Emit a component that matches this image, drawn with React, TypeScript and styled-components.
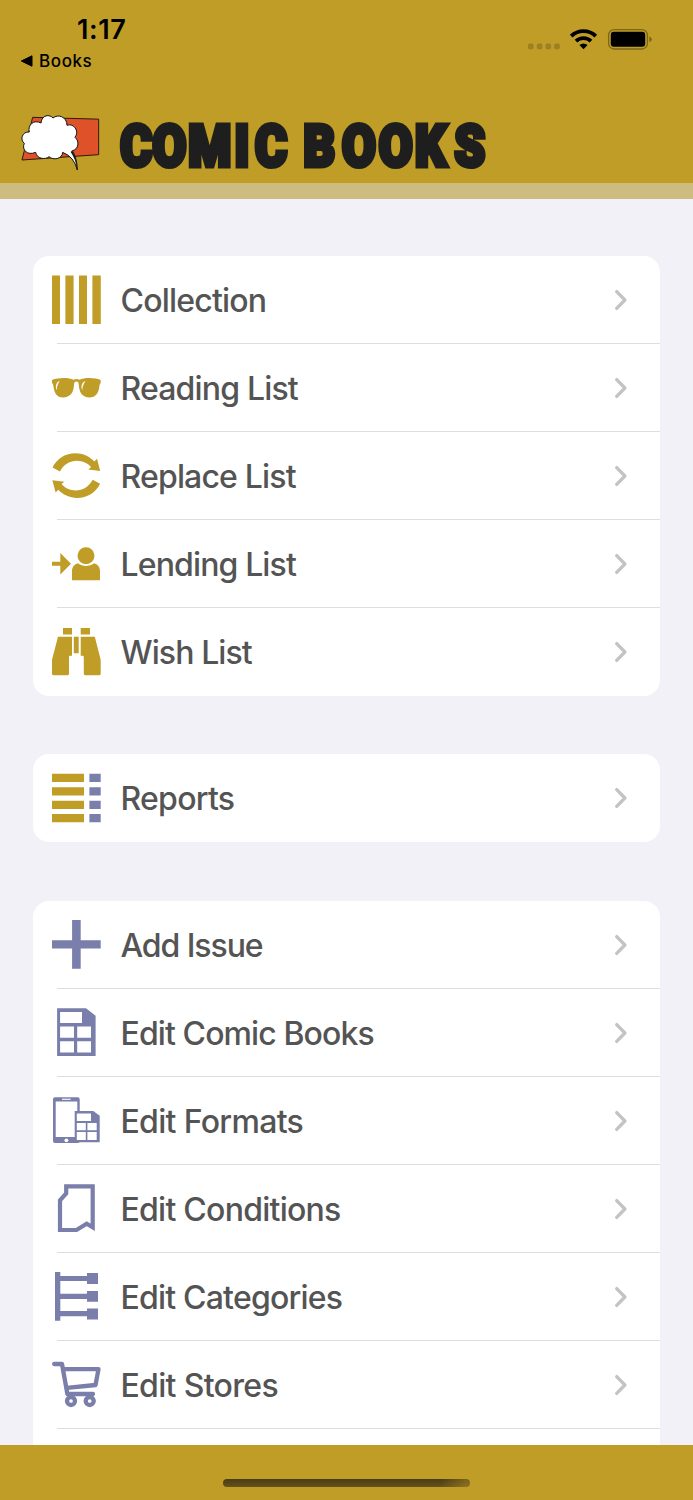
import React from 'react';
import styled, { createGlobalStyle } from 'styled-components';

const GOLD = '#bf9d27';
const VIOLET = '#7a7eaa';

const GlobalStyle = createGlobalStyle`
  *, *::before, *::after { box-sizing: border-box; }
  body { margin: 0; background: #f2f1f7; overflow: hidden; }
`;

const Screen = styled.div`
  width: 693px;
  height: 1500px;
  display: flex;
  flex-direction: column;
  background: #f2f1f7;
  font-family: Inter, 'Liberation Sans', sans-serif;
  overflow: hidden;
`;

const Header = styled.header`
  flex: none;
  height: 183px;
  background: ${GOLD};
  display: flex;
  flex-direction: column;
  justify-content: space-between;
`;

const StatusBar = styled.div`
  display: flex;
  justify-content: space-between;
  padding: 15px 41px 0 20px;
`;

const StatusLeft = styled.div`
  display: flex;
  flex-direction: column;
`;

const Clock = styled.div`
  padding-left: 57px;
  height: 30px;
  font-size: 27px;
  line-height: 30px;
  font-weight: 600;
  letter-spacing: 0.6px;
  color: #000;
`;

const BackLink = styled.div`
  display: flex;
  align-items: center;
  gap: 6px;
  margin-top: 5px;
  height: 22px;
  font-size: 17px;
  line-height: 22px;
  font-weight: 500;
  letter-spacing: 0.6px;
  color: #000;
`;

const StatusIcons = styled.svg`
  display: block;
  margin-top: 11px;
`;

const Brand = styled.div`
  display: flex;
  align-items: flex-end;
  gap: 17px;
  padding: 0 0 10px 20px;
`;

const BrandArt = styled.svg`
  display: block;
  flex: none;
`;

const Wordmark = styled.svg`
  display: block;
  flex: none;
  overflow: visible;
  font-family: Roboto, 'Liberation Sans', sans-serif;
  font-weight: 900;
  font-size: 57px;
  fill: #1e1e1e;
  stroke: #1e1e1e;
  stroke-width: 5px;
  stroke-linejoin: miter;
`;

const Strip = styled.div`
  flex: none;
  height: 16px;
  background: #cdbb80;
`;

const Content = styled.main`
  flex: 1;
  min-height: 0;
  overflow: hidden;
  display: flex;
  flex-direction: column;
  padding: 57px 33px 0;
`;

const Card = styled.section<{ $gap?: number }>`
  flex: none;
  margin-bottom: ${(p) => p.$gap ?? 0}px;
  background: #fff;
  border-radius: 16px;
  overflow: hidden;
`;

const Row = styled.div`
  height: 88px;
  display: flex;
  flex-direction: column;

  &:not(:last-child)::after {
    content: '';
    flex: none;
    height: 1px;
    margin-left: 24px;
    background: #dedee0;
  }
`;

const RowBody = styled.div`
  flex: 1;
  display: flex;
  align-items: flex-start;
  padding: 18px 32px 0 17px;
`;

const Glyph = styled.svg<{ $color: string }>`
  flex: none;
  display: block;
  width: 52px;
  height: 52px;
  fill: ${(p) => p.$color};
  stroke: none;
  color: ${(p) => p.$color};
`;

const Label = styled.span<{ $track: number }>`
  flex: 1;
  margin-left: 18.5px;
  font-size: 32px;
  line-height: 54px;
  font-weight: 450;
  letter-spacing: ${(p) => p.$track}px;
  color: #545454;
  white-space: nowrap;
`;

const Chevron = styled.svg`
  flex: none;
  display: block;
  margin-top: 14px;
`;

const Footer = styled.footer`
  flex: none;
  height: 55.5px;
  background: ${GOLD};
  display: flex;
  justify-content: center;
  padding-top: 34px;
`;

const HomeIndicator = styled.div`
  width: 247px;
  height: 8.5px;
  border-radius: 5px;
  background: linear-gradient(100deg, transparent 88%, rgba(191, 157, 39, 0.4) 98%),
    linear-gradient(180deg, #4a3c16, #66511b);
`;

const icons: Record<string, React.ReactNode> = {
  bars: <path d="M2 1.5h8v48.5h-8zM15.4 1.5h8.2v48.5h-8.2zM29 1.5h8v48.5h-8zM42.4 1.5h8.4v48.5h-8.4z" />,
  glasses: (
    <>
      <path d="M2 18C8 15.8 18 15.2 23.5 17.8C25.5 16.6 27.5 16.6 29.5 17.8C35 15.2 45 15.8 50.7 18V21.3C49.9 21.6 49.7 22.3 49.5 23.5C48.8 31.5 45.5 35.4 39.5 35.4C32.5 35.4 29.3 31 28.8 23C28.7 20.5 28.2 19.4 26.5 19.4S24.1 20.5 24 23C23.6 31 20 35.4 13 35.4C7 35.4 4.2 31.5 3.3 23.5C3.1 22.3 2.8 21.6 2 21.3Z" />
      <path fill="#fff" d="M9.8 19C7.2 19.6 6 22 5.9 24.8C5.9 26.6 6.2 27.6 6.7 28C6.8 24.8 7.9 21.7 9.8 19ZM35.6 19C33 19.6 31.6 22 31.5 24.8C31.5 26.6 31.8 27.6 32.3 28C32.4 24.8 33.7 21.7 35.6 19Z" />
    </>
  ),
  replace: (
    <>
      <path d="M2.5 17.5C7 8.5 15.5 3.3 25.5 3.3C33 3.3 40 6.8 44.3 11.5L47 8.7L50.2 21L38.3 19.5L41 17.2C37.5 12.8 32.5 11 27 10.8C20 10.8 13.5 14.5 10 21.5Z" />
      <path transform="rotate(180 26.3 25.6)" d="M2.5 17.5C7 8.5 15.5 3.3 25.5 3.3C33 3.3 40 6.8 44.3 11.5L47 8.7L50.2 21L38.3 19.5L41 17.2C37.5 12.8 32.5 11 27 10.8C20 10.8 13.5 14.5 10 21.5Z" />
    </>
  ),
  lend: (
    <>
      <path d="M2 23.7H10.3V15L21 25.7L10.3 36.4V27.8H2Z" />
      <circle cx="36" cy="17.7" r="8.5" />
      <path d="M22 42.2V33C22 29 24.5 26.4 28 25.3C32.5 29 39.5 29 44 25.3C47.5 26.4 50 29 50 33V42.2Z" />
    </>
  ),
  binoculars: (
    <>
      <path d="M13 2h9v6.6h-9zM30.7 2h9.3v6.6h-9.3zM23.8 10.7h4.9v16.6h-4.9z" />
      <path d="M8 10.7H22V29.8H20.2Q19 29.8 19 31V47.8Q19 49.2 17.6 49.2H3.4Q2 49.2 2 47.8V35Q2 33.8 2.3 32.5ZM44.8 10.7H30.7V29.8H32.6Q33.8 29.8 33.8 31V47.8Q33.8 49.2 35.2 49.2H49.3Q50.7 49.2 50.7 47.8V35Q50.7 33.8 50.4 32.5Z" />
    </>
  ),
  reports: (
    <>
      <path fill={GOLD} d="M2 1.8h32v8.2h-32zM2 15.2h32v8.2h-32zM2 28.7h32v8.2h-32zM2 42.1h32v8.2h-32z" />
      <path fill={VIOLET} d="M39.4 1.8h11.3v8.2h-11.3zM39.4 15.2h11.3v8.2h-11.3zM39.4 28.7h11.3v8.2h-11.3zM39.4 42.1h11.3v8.2h-11.3z" />
    </>
  ),
  plus: <path d="M22.1 1.1H30.7V21.2H50.7V29.4H30.7V49.8H22.1V29.4H2V21.2H22.1Z" />,
  sheet: (
    <path
      fillRule="evenodd"
      d="M7.1 1.2H36L45.6 8.7V49.1H7.1ZM10.1 5.1V16H32V5.1ZM10.1 19.6V30.8H24V19.6ZM27.2 19.6V30.8H41V19.6ZM10.1 34.2V45.5H24V34.2ZM27.2 34.2V45.5H41V34.2Z"
    />
  ),
  formats: (
    <>
      <path
        fillRule="evenodd"
        d="M5 2.3H27.7Q29.7 2.3 29.7 4.3V46Q29.7 48 27.7 48H5Q3 48 3 46V4.3Q3 2.3 5 2.3ZM5.7 6.4V42H27.3V6.4Z"
      />
      <path fill="#fff" d="M12 3.7h8.7v1.1h-8.7z" />
      <circle cx="16.4" cy="45.3" r="1.9" fill="#fff" />
      <path fill="#fff" d="M26 18h18v28h-18z" />
      <path
        fillRule="evenodd"
        d="M24.7 16H43.3L49.7 20.8V47.2H24.7ZM26.8 18.5V26H41V18.5ZM26.8 28V35.2H35.8V28ZM37.4 28V35.2H46.7V28ZM26.8 37.1V45H35.8V37.1ZM37.4 37.1V45H46.7V37.1Z"
      />
    </>
  ),
  condition: (
    <path
      fill="none"
      stroke="currentColor"
      strokeWidth="4.2"
      d="M10 47V17.3L16.2 10.5V3.4H42.7V44.3L36.7 40.8L26.5 47Z"
    />
  ),
  categories: (
    <path d="M5 1H10.3V5H37V2.1H48V13H37V10.1H10.3V22.7H37V19.9H48V30.8H37V27.9H10.3V40.1H37V37.4H48V48.4H37V45.3H10.3V49.7H5Z" />
  ),
  cart: (
    <g fill="none" stroke="currentColor" strokeWidth="4.3" strokeLinecap="round" strokeLinejoin="round">
      <path d="M4.2 5H12L17.4 35H43" />
      <path d="M13.3 10.2H48.5L45.5 26L17 28.8" />
      <circle cx="21" cy="42" r="4" />
      <circle cx="39.7" cy="42" r="4" />
    </g>
  ),
};

interface Item {
  icon: string;
  label: string;
  color: string;
  track: number;
}

const groups: { gap: number; items: Item[] }[] = [
  {
    gap: 58,
    items: [
      { icon: 'bars', label: 'Collection', color: GOLD, track: -0.8 },
      { icon: 'glasses', label: 'Reading List', color: GOLD, track: -0.83 },
      { icon: 'replace', label: 'Replace List', color: GOLD, track: -0.83 },
      { icon: 'lend', label: 'Lending List', color: GOLD, track: -0.87 },
      { icon: 'binoculars', label: 'Wish List', color: GOLD, track: -0.9 },
    ],
  },
  { gap: 59, items: [{ icon: 'reports', label: 'Reports', color: GOLD, track: -0.75 }] },
  {
    gap: 0,
    items: [
      { icon: 'plus', label: 'Add Issue', color: VIOLET, track: -1.08 },
      { icon: 'sheet', label: 'Edit Comic Books', color: VIOLET, track: -0.9 },
      { icon: 'formats', label: 'Edit Formats', color: VIOLET, track: -0.68 },
      { icon: 'condition', label: 'Edit Conditions', color: VIOLET, track: -0.74 },
      { icon: 'categories', label: 'Edit Categories', color: VIOLET, track: -0.8 },
      { icon: 'cart', label: 'Edit Stores', color: VIOLET, track: -0.68 },
    ],
  },
];

function MenuRow({ item }: { item: Item }) {
  return (
    <Row>
      <RowBody>
        <Glyph $color={item.color} viewBox="0 0 52 52">
          {icons[item.icon]}
        </Glyph>
        <Label $track={item.track}>{item.label}</Label>
        <Chevron width="14" height="24" viewBox="0 0 14 24">
          <path d="M2.7 3.6L10.9 12L2.7 20.4" fill="none" stroke="#c3c3c5" strokeWidth="3.3" strokeLinecap="round" strokeLinejoin="round" />
        </Chevron>
      </RowBody>
    </Row>
  );
}

export default function App() {
  return (
    <>
      <GlobalStyle />
      <Screen>
        <Header>
          <StatusBar>
            <StatusLeft>
              <Clock>1:17</Clock>
              <BackLink>
                <svg width="13" height="12" viewBox="0 0 13 12">
                  <path d="M1.3 6L12 0.8V11.2Z" stroke="#000" strokeWidth="1" strokeLinejoin="round" />
                </svg>
                Books
              </BackLink>
            </StatusLeft>
            <StatusIcons width="126" height="26" viewBox="526 26 126 26">
              <g fill="#9c8021">
                <rect x="528" y="43.6" width="5.6" height="5.6" rx="1.6" />
                <rect x="536.8" y="43.6" width="5.6" height="5.6" rx="1.6" />
                <rect x="545.5" y="43.6" width="5.6" height="5.6" rx="1.6" />
                <rect x="554.2" y="43.6" width="5.6" height="5.6" rx="1.6" />
              </g>
              <g fill="none" stroke="#000" strokeWidth="3.8">
                <path d="M571.2 36.2A17.6 17.6 0 0 1 595.8 36.2" />
                <path d="M576 41.1A10.8 10.8 0 0 1 591 41.1" />
              </g>
              <path d="M579.4 45A6 6 0 0 1 587.6 45L583.5 49.2Z" />
              <rect x="608.6" y="29.6" width="38.8" height="19.4" rx="5.6" fill="none" stroke="#7c661b" strokeWidth="1.3" />
              <rect x="610.8" y="31.8" width="34.4" height="15" rx="3" />
              <path d="M649.3 36.4Q651.8 37.2 651.8 39.3T649.3 42.2Z" fill="#7c661b" />
            </StatusIcons>
          </StatusBar>
          <Brand>
            <BrandArt width="82" height="60" viewBox="60 339 246 180">
              <path d="M98 352L296 357.5V464L66 480Z" fill="#df5129" stroke="#2a1c0c" strokeWidth="3" />
              <path
                d="M88 396C82 376 101 357 123 369C125 344 149 342 159 354C174 341 201 350 201 376C220 368 240 393 225 412C240 424 235 449 217 452Q231 474 232 510Q222 470 188 457C187 477 160 482 147 470C136 480 110 477 107 457C82 468 64 449 73 430C59 420 66 394 88 396Z"
                fill="#fff"
                stroke="#111"
                strokeWidth="3"
                strokeLinejoin="round"
              />
              <path d="M216 452Q231 474 232 510Q226 474 212 456Z" fill="#111" />
            </BrandArt>
            <Wordmark width="370" height="60" viewBox="119 112 370 60">
              <text
                transform="scale(0.86 1)"
                x="139.8 177.2 219 272.6 296.5 338 353 397.700 440.300 482.500 528.500"
                y="164.7"
              >
                COMIC BOOKS
              </text>
            </Wordmark>
          </Brand>
        </Header>
        <Strip />
        <Content>
          {groups.map((group, i) => (
            <Card key={i} $gap={group.gap}>
              {group.items.map((item) => (
                <MenuRow key={item.label} item={item} />
              ))}
              {i === groups.length - 1 && <Row />}
            </Card>
          ))}
        </Content>
        <Footer>
          <HomeIndicator />
        </Footer>
      </Screen>
    </>
  );
}
